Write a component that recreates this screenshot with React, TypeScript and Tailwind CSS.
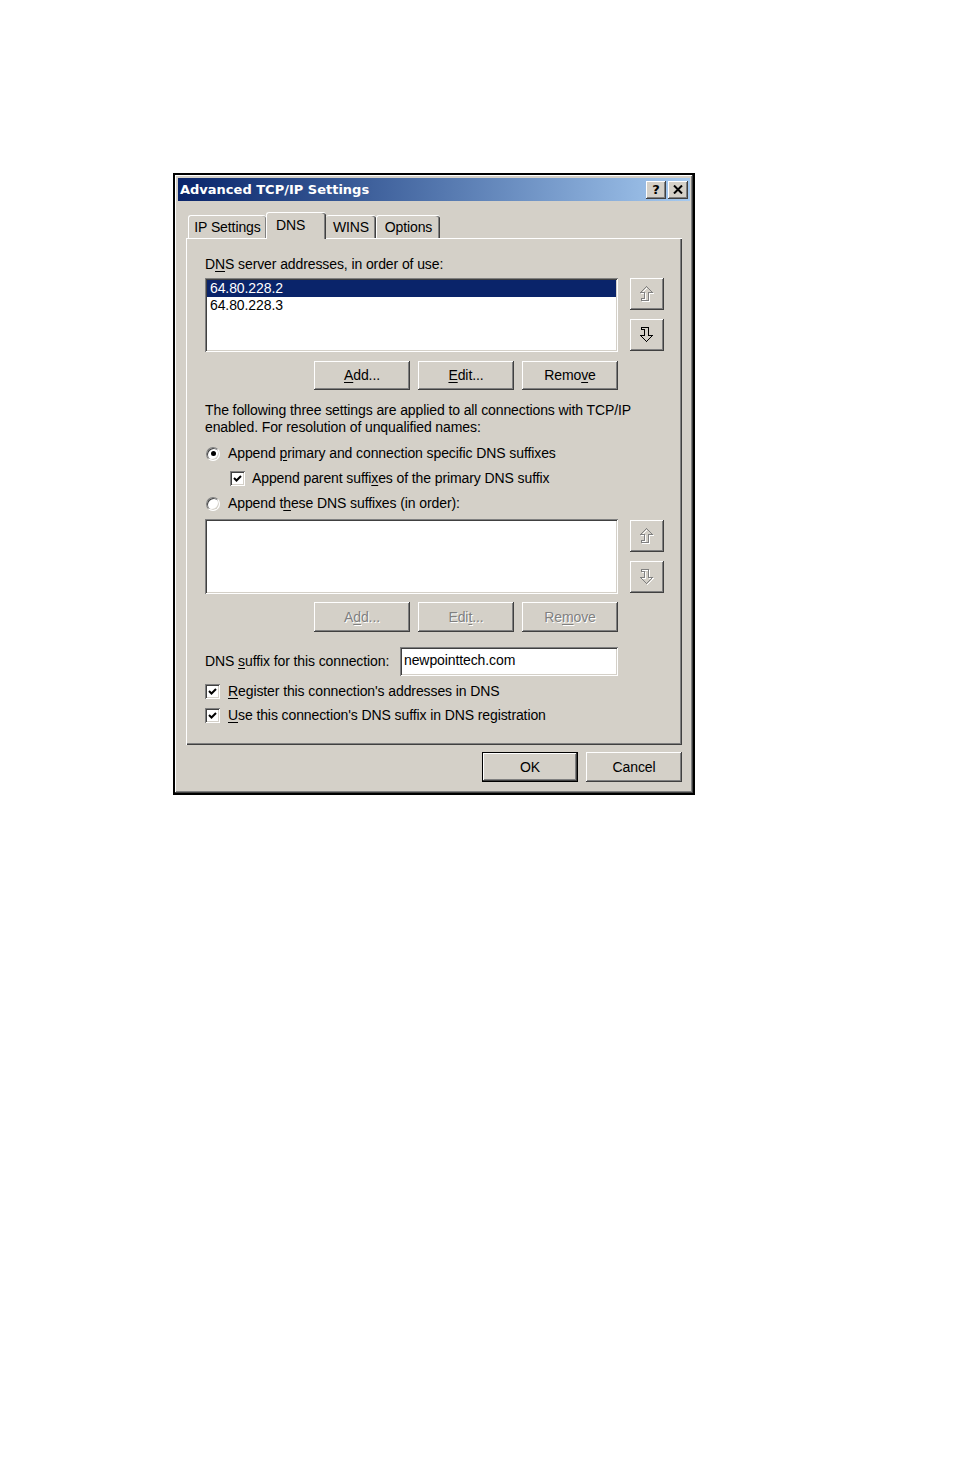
import React from "react";

const raised =
  "shadow-[inset_-1px_-1px_#404040,inset_1px_1px_#ffffff,inset_-2px_-2px_#808080,inset_2px_2px_#d4d0c8]";
const sunken =
  "shadow-[inset_1px_1px_#808080,inset_-1px_-1px_#ffffff,inset_2px_2px_#404040,inset_-2px_-2px_#d4d0c8]";
const grayText = "text-[#808080] [text-shadow:1px_1px_0_#ffffff]";

function U({ children }: { children: React.ReactNode }) {
  return <span className="underline underline-offset-[2px]">{children}</span>;
}

function Button({
  children,
  disabled,
  isDefault,
  className = "",
}: {
  children: React.ReactNode;
  disabled?: boolean;
  isDefault?: boolean;
  className?: string;
}) {
  if (isDefault) {
    return (
      <div className={`border border-black bg-[#d4d0c8] ${className}`}>
        <div className={`flex h-full w-full items-center justify-center ${raised}`}>{children}</div>
      </div>
    );
  }
  return (
    <div
      className={`flex items-center justify-center bg-[#d4d0c8] ${raised} ${disabled ? grayText : "text-black"} ${className}`}
    >
      {children}
    </div>
  );
}

function ArrowIcon({ dir, disabled }: { dir: "up" | "down"; disabled?: boolean }) {
  const pts =
    dir === "up"
      ? "6.5,0.5 12.5,6.5 8.5,6.5 8.5,14.5 1.5,14.5 1.5,12.5 4.5,12.5 4.5,6.5 0.5,6.5"
      : "1.5,0.5 8.5,0.5 8.5,8.5 12.5,8.5 6.5,14.5 0.5,8.5 4.5,8.5 4.5,2.5 1.5,2.5";
  return (
    <svg width="15" height="17" viewBox="0 0 15 17" shapeRendering="crispEdges">
      {disabled && <polygon points={pts} transform="translate(1,1)" fill="none" stroke="#ffffff" />}
      <polygon points={pts} fill="none" stroke={disabled ? "#808080" : "#000000"} />
    </svg>
  );
}

function ArrowButtons({ upDisabled, downDisabled }: { upDisabled?: boolean; downDisabled?: boolean }) {
  return (
    <div className="flex w-[34px] flex-col gap-[9px]">
      <Button className="h-[32px] w-[34px]">
        <ArrowIcon dir="up" disabled={upDisabled} />
      </Button>
      <Button className="h-[32px] w-[34px]">
        <ArrowIcon dir="down" disabled={downDisabled} />
      </Button>
    </div>
  );
}

function CheckBox() {
  return (
    <div className={`h-[15px] w-[15px] shrink-0 bg-white ${sunken}`}>
      <svg width="15" height="15" viewBox="0 0 15 15">
        <polyline points="4,7 6.5,9.5 11,5" fill="none" stroke="#000" strokeWidth="2" />
      </svg>
    </div>
  );
}

function Radio({ checked }: { checked?: boolean }) {
  return (
    <div className="flex h-[14px] w-[14px] shrink-0 items-center justify-center rounded-full border border-t-[#808080] border-l-[#808080] border-r-white border-b-white bg-white shadow-[inset_1px_1px_#404040,inset_-1px_-1px_#d4d0c8]">
      {checked && <div className="h-[5px] w-[5px] rounded-full bg-black" />}
    </div>
  );
}

export default function App() {
  return (
    <div className="min-h-[1475px] w-[954px] bg-white pl-[173px] pt-[173px] font-['Liberation_Sans',Arial,sans-serif] text-[14px] tracking-[-0.1px] text-black">
      <div className="h-[622px] w-[522px] border-2 border-black bg-[#d4d0c8]">
        <div className={`flex h-full w-full flex-col p-[3px] ${raised}`}>
          {/* title bar */}
          <div className="flex h-[23px] items-center justify-between bg-gradient-to-r from-[#0a246a] to-[#a6caf0] pl-[2px] pr-[2px]">
            <span className="font-['DejaVu_Sans',Verdana,sans-serif] text-[13px] font-bold tracking-[0px] text-white">
              Advanced TCP/IP Settings
            </span>
            <div className="flex gap-[2px]">
              <Button className="h-[18px] w-[20px]">
                <span className="font-['DejaVu_Sans',sans-serif] text-[13px] font-bold leading-none">?</span>
              </Button>
              <Button className="h-[18px] w-[20px]">
                <svg width="10" height="9" viewBox="0 0 10 9">
                  <path d="M1 0.5 L9 8.5 M9 0.5 L1 8.5" stroke="#000" strokeWidth="2" />
                </svg>
              </Button>
            </div>
          </div>

          <div className="flex flex-1 flex-col px-[8px] pt-[10px]">
            {/* tabs */}
            <div className="relative z-10 flex h-[27px] items-end pl-[2px]">
              <div className="flex h-[23px] w-[78px] items-center justify-center rounded-t-[3px] border-l border-t border-white pt-[1px] shadow-[inset_-1px_0_#808080]">
                IP Settings
              </div>
              <div className="-mb-[1px] flex h-[27px] w-[60px] items-start justify-start rounded-t-[3px] border-l border-t border-white bg-[#d4d0c8] pl-[9px] pt-[2px] shadow-[inset_-1px_0_#404040,inset_-2px_0_#808080]">
                DNS
              </div>
              <div className="flex h-[23px] w-[50px] items-center justify-center rounded-t-[3px] border-t border-white pt-[1px] shadow-[inset_-1px_0_#404040,inset_-2px_0_#808080]">
                WINS
              </div>
              <div className="flex h-[23px] w-[64px] items-center justify-center rounded-t-[3px] border-l border-t border-white pt-[1px] shadow-[inset_-1px_0_#404040,inset_-2px_0_#808080]">
                Options
              </div>
            </div>

            {/* tab panel */}
            <div className="flex h-[507px] flex-col border-l border-t border-white pl-[18px] pt-[17px] shadow-[inset_-1px_-1px_#404040,inset_-2px_-2px_#808080]">
              <div className="h-[17px] leading-[17px]">
                D<U>N</U>S server addresses, in order of use:
              </div>

              <div className="mt-[5px] flex gap-[12px]">
                <div className={`h-[74px] w-[413px] bg-white p-[2px] ${sunken}`}>
                  <div className="h-[17px] bg-[#0a246a] pl-[3px] leading-[17px] text-white">64.80.228.2</div>
                  <div className="h-[17px] pl-[3px] leading-[17px]">64.80.228.3</div>
                </div>
                <ArrowButtons upDisabled />
              </div>

              <div className="mt-[9px] flex w-[413px] justify-end gap-[8px]">
                <Button className="h-[29px] w-[96px]">
                  <U>A</U>dd...
                </Button>
                <Button className="h-[29px] w-[96px]">
                  <U>E</U>dit...
                </Button>
                <Button className="h-[29px] w-[96px]">
                  Remo<U>v</U>e
                </Button>
              </div>

              <div className="mt-[12px] leading-[17px]">
                The following three settings are applied to all connections with TCP/IP
                <br />
                enabled. For resolution of unqualified names:
              </div>

              <div className="mt-[9px] flex h-[17px] items-center gap-[8px] pl-[1px]">
                <Radio checked />
                <span>
                  Append <U>p</U>rimary and connection specific DNS suffixes
                </span>
              </div>
              <div className="mt-[8px] flex h-[17px] items-center gap-[7px] pl-[25px]">
                <CheckBox />
                <span>
                  Append parent suffi<U>x</U>es of the primary DNS suffix
                </span>
              </div>
              <div className="mt-[8px] flex h-[17px] items-center gap-[8px] pl-[1px]">
                <Radio />
                <span>
                  Append t<U>h</U>ese DNS suffixes (in order):
                </span>
              </div>

              <div className="mt-[7px] flex gap-[12px]">
                <div className={`h-[75px] w-[413px] bg-white ${sunken}`} />
                <div className="pt-[1px]">
                  <ArrowButtons upDisabled downDisabled />
                </div>
              </div>

              <div className="mt-[8px] flex w-[413px] justify-end gap-[8px]">
                <Button disabled className="h-[30px] w-[96px]">
                  A<U>d</U>d...
                </Button>
                <Button disabled className="h-[30px] w-[96px]">
                  Edi<U>t</U>...
                </Button>
                <Button disabled className="h-[30px] w-[96px]">
                  Re<U>m</U>ove
                </Button>
              </div>

              <div className="mt-[15px] flex h-[29px] items-center">
                <span className="w-[195px]">
                  DNS <U>s</U>uffix for this connection:
                </span>
                <div className={`flex h-[29px] w-[218px] items-center bg-white pl-[4px] pb-[3px] ${sunken}`}>
                  newpointtech.com
                </div>
              </div>

              <div className="mt-[7px] flex h-[17px] items-center gap-[8px]">
                <CheckBox />
                <span>
                  <U>R</U>egister this connection's addresses in DNS
                </span>
              </div>
              <div className="mt-[7px] flex h-[17px] items-center gap-[8px]">
                <CheckBox />
                <span>
                  <U>U</U>se this connection's DNS suffix in DNS registration
                </span>
              </div>
            </div>

            {/* dialog buttons */}
            <div className="mt-[7px] flex justify-end gap-[8px]">
              <Button isDefault className="h-[30px] w-[96px]">
                OK
              </Button>
              <Button className="h-[30px] w-[96px]">Cancel</Button>
            </div>
          </div>
        </div>
      </div>
    </div>
  );
}
